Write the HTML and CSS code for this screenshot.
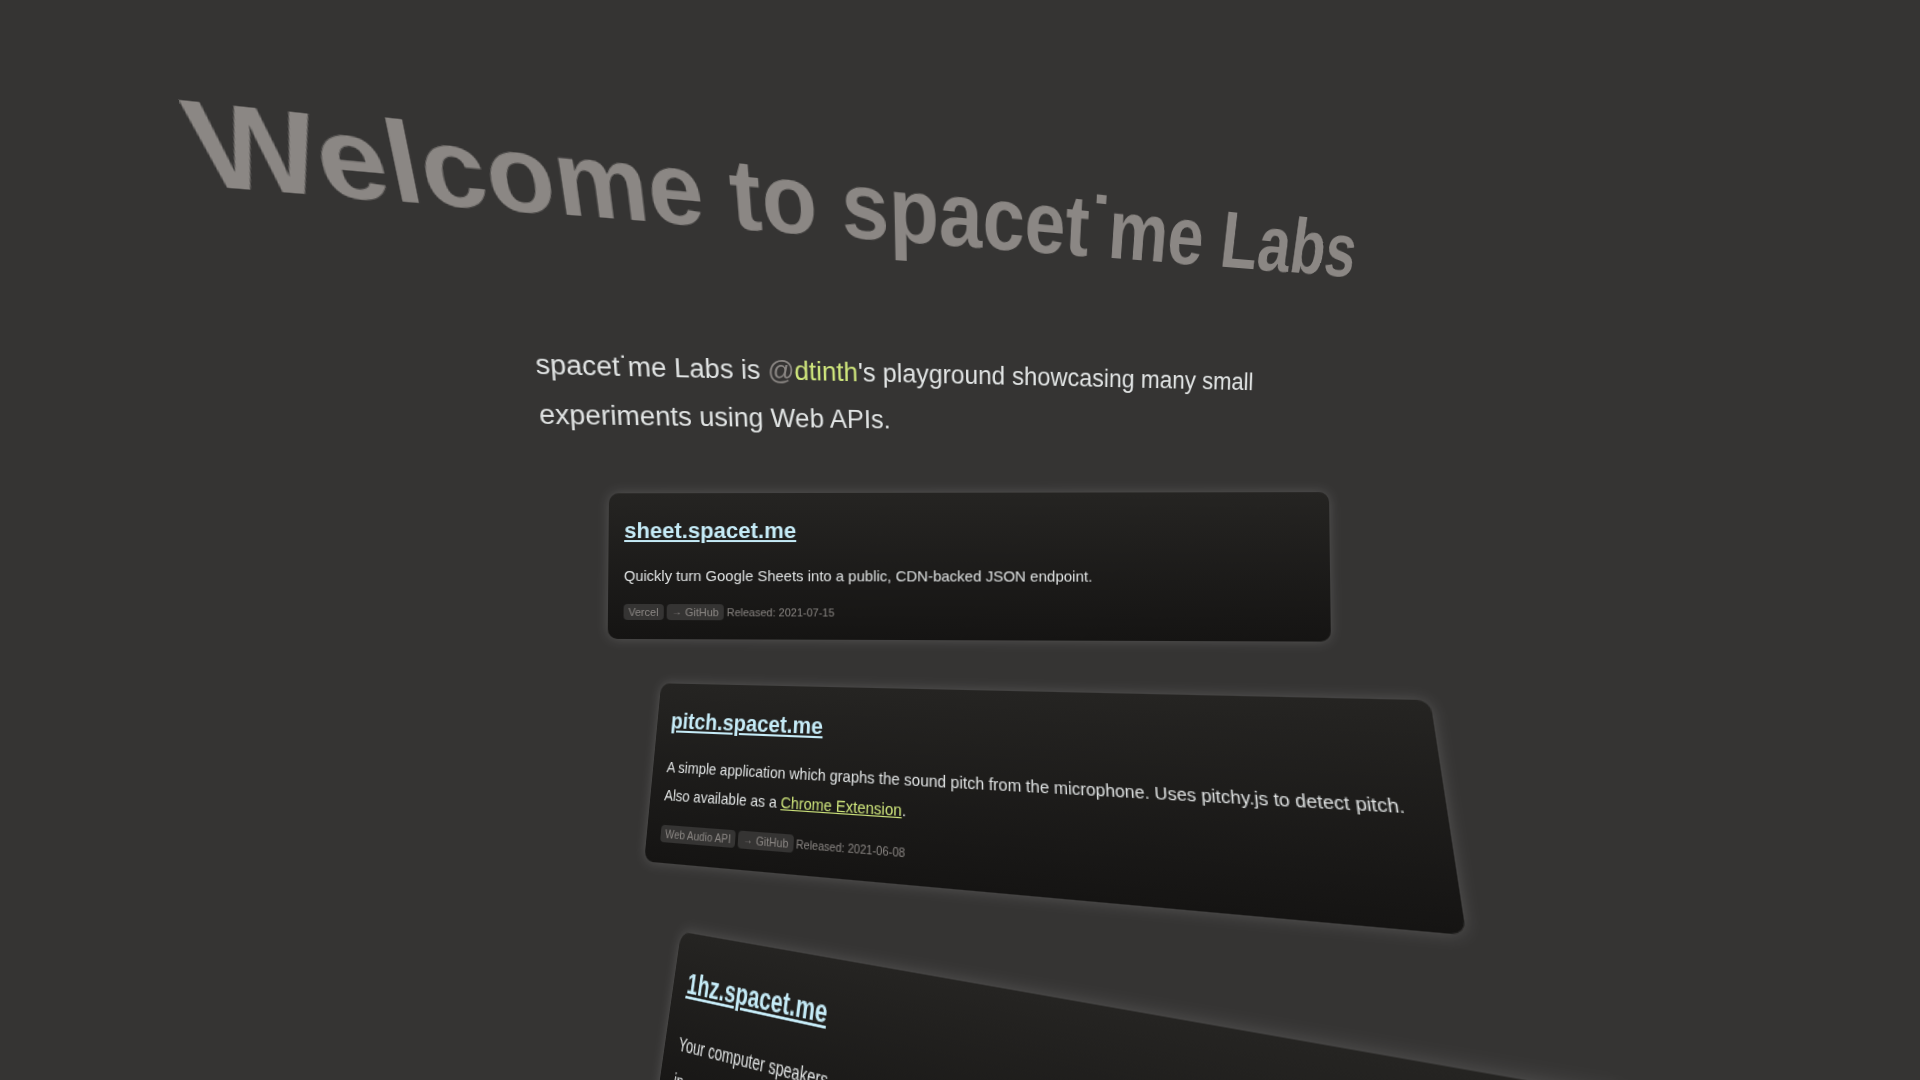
FILE: index.html
```html
<!DOCTYPE html>
<html lang="en">
<head>
<meta charset="utf-8">
<title>spacet.me Labs</title>
<link rel="stylesheet" href="styles.css">
</head>
<body>
<main class="page">
  <h1 class="title">Welcome to spacet<span class="dot">˙</span>me Labs</h1>
  <p class="intro">spacet<span class="dot">˙</span>me Labs is <span class="at">@</span><a class="handle">dtinth</a>'s playground showcasing many small<br>experiments using Web APIs.</p>
  <article class="card card-sheet">
    <h3 class="card-title"><a>sheet.spacet.me</a></h3>
    <p class="card-text">Quickly turn Google Sheets into a public, CDN-backed JSON endpoint.</p>
    <p class="meta"><span class="tag">Vercel</span> <span class="tag"><span class="arrow">→</span> GitHub</span> Released: 2021-07-15</p>
  </article>
  <article class="card card-pitch">
    <h3 class="card-title"><a>pitch.spacet.me</a></h3>
    <p class="card-text">A simple application which graphs the sound pitch from the microphone. Uses pitchy.js to detect pitch. Also available as a <a class="link">Chrome Extension</a>.</p>
    <p class="meta"><span class="tag">Web Audio API</span> <span class="tag"><span class="arrow">→</span> GitHub</span> Released: 2021-06-08</p>
  </article>
  <article class="card card-hz">
    <h3 class="card-title"><a>1hz.spacet.me</a></h3>
    <p class="card-text">Your computer speakers<br>in</p>
  </article>
</main>
</body>
</html>
```
FILE: styles.css
```css
html, body {
  margin: 0;
  height: 100%;
  overflow: hidden;
  background: #353433;
  color: #e0e3e3;
  font-family: "Liberation Sans", Arial, sans-serif;
}
h1, h3, p { margin: 0; }

.page { width: 720px; margin: 0 auto; padding-top: 120px; }

/* Every block is tilted in space around its own top left corner. */
.title, .intro, .card { transform-origin: 0 0; }

.title {
  font-size: 80px;
  line-height: 100px;
  white-space: nowrap;
  color: #8b8784;
  transform: matrix3d(1.56836, .181782, 0, 5.9011e-4, .209144, 1.62659, 0, 6.0862e-4, 0, 0, 1, 0, -431.829, -56.2626, 0, 1);
}
.intro {
  margin-top: 100px;
  font-size: 27px;
  line-height: 48.6px;
  white-space: nowrap;
  transform: matrix3d(1.06874, .035657, 0, 2.056e-4, .0638, 1.03813, 0, 1.518e-4, 0, 0, 1, 0, -66.265, 19.995, 0, 1);
}
.title .dot { margin: 0 -.04em 0 -.015em; }
.intro .dot { margin-right: -.055em; }
.at { color: #8b8784; }
.handle, .link { color: #cfe67c; }

.card {
  box-sizing: border-box;
  margin-top: 45px;
  padding: 16px 16px 17px;
  border-radius: 10px;
  background: linear-gradient(#252422, #151413);
  box-shadow: 0 0 12px rgba(255, 255, 255, .16);
}
.card-sheet { transform: matrix3d(.973667, -.00275441, 0, -3.6123e-5, -.00913387, .991981, 0, -2.9839e-5, 0, 0, 1, 0, 9, 31.3125, 0, 1); }
.card-pitch { transform: matrix3d(.808211, .00869514, 0, -3.1299e-4, -.11224, .963042, 0, -3.1616e-4, 0, 0, 1, 0, 61.2, 30.3125, 0, 1); }
.card-hz { transform: matrix3d(.776389, .11196, 0, -5.2837e-4, -.200912, 1.2741, 0, -2.0342e-4, 0, 0, 1, 0, 81.0785, 60.6946, 0, 1); }

.card-title { padding-top: 1.5px; font-size: 22.5px; line-height: 40px; color: #c5ebf7; }
.card-title a, .link { text-decoration: underline; }
.card-text { margin-top: 11px; font-size: 15px; line-height: 27px; }
.meta { margin-top: 13.5px; font-size: 11px; line-height: 20px; color: #8b8784; }
.tag { padding: 2px 5px; border-radius: 4px; background: #353433; }
.arrow { margin: 0 .5px; font-size: 10px; line-height: 1; vertical-align: 1px; }
```
